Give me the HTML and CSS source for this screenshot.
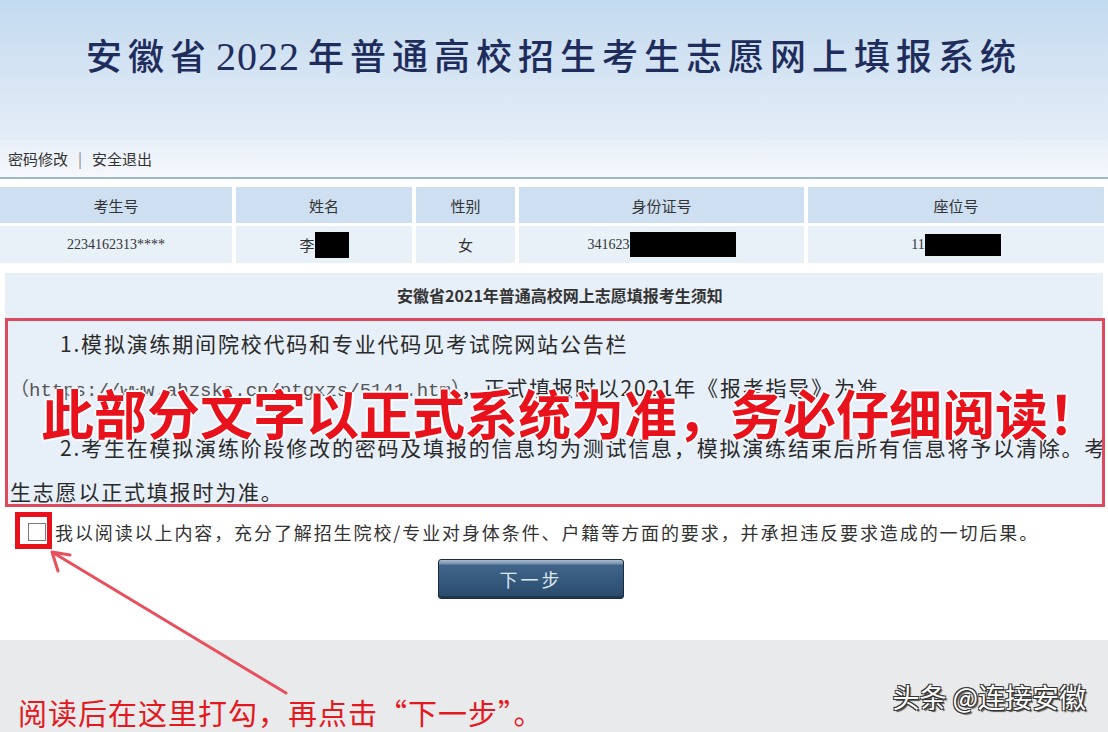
FILE: index.html
```html
<!DOCTYPE html>
<html lang="zh-CN">
<head>
    <meta charset="UTF-8">
    <title>安徽省2022年普通高校招生考生志愿网上填报系统</title>
    <link rel="stylesheet" href="styles.css">
</head>
<body>
<div class="page">

    <!-- Banner -->
    <div class="banner">
        <h1>安徽省<span class="digits">2022</span>年普通高校招生考生志愿网上填报系统</h1>
    </div>

    <!-- Toolbar -->
    <div class="toolbar">
        <a href="#">密码修改</a>
        <span class="sep">|</span>
        <a href="#">安全退出</a>
    </div>

    <!-- Candidate info -->
    <div class="info">
        <div class="th">考生号</div>
        <div class="th">姓名</div>
        <div class="th">性别</div>
        <div class="th">身份证号</div>
        <div class="th">座位号</div>

        <div class="td num">2234162313****</div>
        <div class="td">李<span class="mask mask-name"></span></div>
        <div class="td">女</div>
        <div class="td num">341623<span class="mask mask-id"></span></div>
        <div class="td num">11<span class="mask mask-seat"></span></div>
    </div>

    <!-- Notice -->
    <div class="notice">
        <h2>安徽省2021年普通高校网上志愿填报考生须知</h2>
        <div class="notice-body">
            <p>1.模拟演练期间院校代码和专业代码见考试院网站公告栏<br><span class="url">（https://www.ahzsks.cn/ptgxzs/5141.htm）</span>，正式填报时以2021年《报考指导》为准。</p>
            <p>2.考生在模拟演练阶段修改的密码及填报的信息均为测试信息，模拟演练结束后所有信息将予以清除。考<br>生志愿以正式填报时为准。</p>
        </div>
        <div class="stamp">此部分文字以正式系统为准，务必仔细阅读！</div>
    </div>

    <label class="agree">
        <input type="checkbox" class="check">
        <span>我以阅读以上内容，充分了解招生院校/专业对身体条件、户籍等方面的要求，并承担违反要求造成的一切后果。</span>
    </label>

    <div class="actions">
        <button class="next">下一步</button>
    </div>

    <div class="foot">
        <span class="hint">阅读后在这里打勾，再点击“下一步”。</span>
        <span class="mark">头条 @连接安徽</span>
    </div>

    <!-- annotations drawn over the page -->
    <span class="ring"></span>
    <svg class="arrow" width="1108" height="732" viewBox="0 0 1108 732">
        <path d="M286 693 L52 552 M52 552 L70 555 M52 552 L58 571" fill="none" stroke="#e8505e" stroke-width="3" stroke-linecap="round"/>
    </svg>
</div>
</body>
</html>
```

FILE: styles.css
```css
* {
    margin: 0;
    padding: 0;
    box-sizing: border-box;
}

body {
    font-family: "Noto Sans CJK SC", sans-serif;
    background: #fff;
    color: #333;
}

.page {
    position: relative;
    width: 1108px;
    height: 732px;
    overflow: hidden;
    background: #fff;
}

/* banner */
.banner {
    height: 140px;
    background: linear-gradient(#c2daef 0%, #d3e3f3 45%, #e4edf8 100%);
    padding-top: 32px;
    text-align: center;
}

.banner h1 {
    font-size: 36px;
    font-weight: 500;
    line-height: 44px;
    letter-spacing: 6px;
    color: #1f2d5c;
}

.banner .digits {
    font-family: "Liberation Serif", serif;
    font-size: 40px;
    letter-spacing: 1px;
    margin: 0 8px 0 4px;
}

/* toolbar */
.toolbar {
    height: 39px;
    padding-left: 8px;
    display: flex;
    align-items: center;
    gap: 10px;
    font-size: 15px;
    background: linear-gradient(#e8eff8, #f5f8fc);
    border-bottom: 2px solid #9db8cf;
}

.toolbar a {
    color: #333;
    text-decoration: none;
}

.toolbar .sep {
    color: #888;
}

/* info grid */
.info {
    margin-top: 8px;
    display: grid;
    grid-template-columns: 232px 176px 99px 285px 296px;
    grid-template-rows: 36px 37px;
    column-gap: 4px;
    row-gap: 3px;
}

.th,
.td {
    display: flex;
    align-items: center;
    justify-content: center;
    font-size: 15px;
}

.th {
    background: #cddff0;
    color: #333;
}

.td {
    background: #e8f0f8;
    color: #333;
}

.td.num {
    font-family: "Liberation Serif", serif;
    font-size: 14px;
}

.mask {
    display: inline-block;
    background: #000;
}

.mask-name {
    width: 34px;
    height: 26px;
}

.mask-id {
    width: 106px;
    height: 25px;
}

.mask-seat {
    width: 76px;
    height: 22px;
}

/* notice */
.notice {
    position: relative;
    margin: 10px 5px 0 5px;
    background: #e7eff8;
}

.notice h2 {
    height: 45px;
    line-height: 45px;
    text-align: center;
    font-size: 16px;
    font-weight: 700;
    color: #333;
    padding-left: 12px;
}

.notice-body {
    border: 3px solid #dc4a5b;
    margin-right: -2px;
    padding: 0 0 0 2px;
    height: 189px;
    font-size: 21px;
    letter-spacing: 1.8px;
    line-height: 44px;
    color: #2a2a2a;
    white-space: nowrap;
    overflow: hidden;
}

.notice-body p {
    text-indent: 50px;
}

.notice-body p + p {
    margin-top: 12px;
}

.notice-body .url {
    font-family: "Liberation Mono", monospace;
    font-size: 19px;
    letter-spacing: 0;
    color: #555;
}

.stamp {
    position: absolute;
    left: 36px;
    top: 109px;
    font-size: 53px;
    font-weight: 700;
    line-height: 60px;
    color: #e8121c;
    white-space: nowrap;
    text-shadow: 2px 0 0 #fff, -2px 0 0 #fff, 0 2px 0 #fff, 0 -2px 0 #fff;
}

/* agree row */
.agree {
    margin-top: 10px;
    height: 30px;
    padding-left: 28px;
    display: flex;
    align-items: center;
    gap: 9px;
    font-size: 18px;
    letter-spacing: 1.9px;
    color: #333;
}

.check {
    appearance: none;
    width: 18px;
    height: 18px;
    border: 1px solid #7a7a7a;
    background: #fff;
    flex: none;
}

.actions {
    margin-top: 12px;
    padding-left: 438px;
}

.next {
    width: 186px;
    height: 40px;
    border: 1px solid #1c2c3e;
    border-radius: 3px;
    background: linear-gradient(#a7bbcd 0%, #7e98b2 9%, #41658a 14%, #34597d 55%, #2a4a6b 100%);
    color: #dfe7ef;
    font-family: "Noto Sans CJK SC", sans-serif;
    font-size: 18px;
    letter-spacing: 3px;
    box-shadow: inset 0 -2px 0 rgba(0, 0, 0, 0.25);
    cursor: pointer;
}

/* footer strip */
.foot {
    position: absolute;
    left: 0;
    right: 0;
    bottom: 0;
    height: 92px;
    background: #e9eaec;
    display: flex;
    justify-content: space-between;
    align-items: flex-end;
    padding: 0 22px 2px 18px;
}

.hint {
    font-size: 29px;
    line-height: 36px;
    letter-spacing: 1px;
    color: #e3191f;
}

.mark {
    margin-bottom: 16px;
    font-size: 27px;
    line-height: 34px;
    color: #fff;
    text-shadow: 1px 1px 0 #333, -1px -1px 0 #333, 1px -1px 0 #333, -1px 1px 0 #333, 2px 2px 1px #555;
}

/* annotations */
.ring {
    position: absolute;
    left: 15px;
    top: 512px;
    width: 37px;
    height: 37px;
    border: 5px solid #e8101a;
}

.arrow {
    position: absolute;
    left: 0;
    top: 0;
    pointer-events: none;
}
```
